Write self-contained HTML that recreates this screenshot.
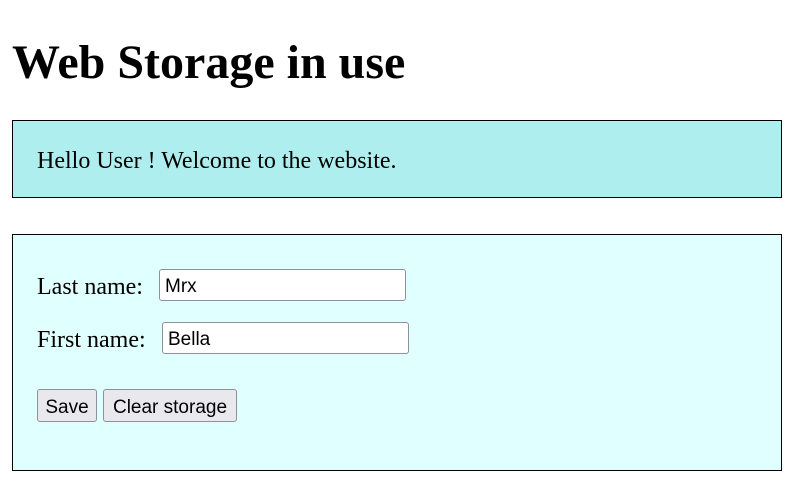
<!DOCTYPE html>
<html><head><style>
body{margin:0;width:798px;height:483px;background:#fff;font-family:"Liberation Serif",serif;position:relative;overflow:hidden}
.a{position:absolute;white-space:nowrap}
h1{position:absolute;left:12px;top:33px;margin:0;font-size:48px;line-height:60px;font-weight:bold}
.box{position:absolute;left:12px;width:768px;border:1px solid #000}
.lbl{font-size:24px;line-height:28px}
.inp{position:absolute;box-sizing:border-box;background:#fff;border:1px solid #8f8f9d;border-radius:3px;font-family:"Liberation Sans",sans-serif;font-size:19px;line-height:33px;padding-left:5px;height:32px;width:247px}
.btn{position:absolute;box-sizing:border-box;background:#e9e9ed;border:1px solid #8f8f9d;border-radius:3px;font-family:"Liberation Sans",sans-serif;font-size:19px;line-height:35px;text-align:center;height:33px;top:389px}
</style></head><body>
<h1>Web Storage in use</h1>
<div class="box" style="top:120px;height:76px;background:#afeeee"></div>
<div class="a lbl" style="left:37px;top:147px">Hello User ! Welcome to the website.</div>
<div class="box" style="top:234px;height:235px;background:#e0ffff"></div>
<div class="a lbl" style="left:37px;top:273px">Last name:</div>
<div class="inp" style="left:159px;top:269px">Mrx</div>
<div class="a lbl" style="left:37px;top:326px">First name:</div>
<div class="inp" style="left:162px;top:322px">Bella</div>
<div class="btn" style="left:37px;width:60px">Save</div>
<div class="btn" style="left:103px;width:134px">Clear storage</div>
</body></html>
